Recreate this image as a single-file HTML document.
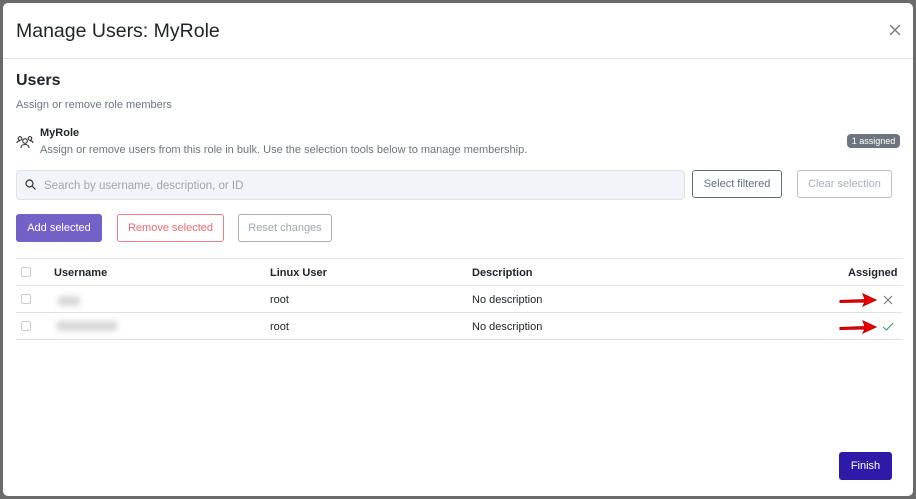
<!DOCTYPE html>
<html><head><meta charset="utf-8"><style>
*{box-sizing:border-box;margin:0;padding:0}
html,body{width:916px;height:499px;overflow:hidden}
body{background:#6b6b6b;font-family:"Liberation Sans",sans-serif;position:relative}
.modal{position:absolute;left:3px;top:3px;width:910px;height:493px;background:#fff;border-radius:5px;overflow:hidden}
.hdr{height:56px;border-bottom:1px solid #dee2e6;position:relative}
.hdr h1{position:absolute;left:13px;top:17px;font-size:19.5px;font-weight:normal;color:#212529}
.close{position:absolute;right:12px;top:21px}
.abs{position:absolute}
.t{color:#212529}
.muted{color:#6c757d}
.btn{position:absolute;border-radius:3px;font-size:11px;text-align:center;background:#fff}
.cb{position:absolute;width:10px;height:10px;border:1px solid #ccc;border-radius:2px;left:18px}
.line{position:absolute;left:13px;width:886px;height:1px;background:#dee2e6}
.blur{position:absolute;background:#d8d8d8;filter:blur(3px)}
</style></head><body>
<div class="modal">
<div class="hdr"><h1>Manage Users: MyRole</h1>
<svg class="close" width="12" height="12" viewBox="0 0 12 12"><path d="M1 1L11 11M11 1L1 11" stroke="#777" stroke-width="1.3"/></svg></div>
<div class="abs t" style="left:13px;top:69px;font-size:16px;font-weight:bold">Users</div>
<div class="abs muted" style="left:13px;top:96px;font-size:11px">Assign or remove role members</div>
<svg class="abs" style="left:13px;top:132px" width="18" height="14" viewBox="0 0 18 14" fill="none" stroke="#333" stroke-width="1.1"><circle cx="9" cy="6" r="2.3"/><path d="M5 13c0-2.5 2-3.5 4-3.5s4 1 4 3.5"/><circle cx="4" cy="3.5" r="1.8"/><circle cx="14" cy="3.5" r="1.8"/><path d="M1 8c0-1.5 1.2-2.2 3-2.2M17 8c0-1.5-1.2-2.2-3-2.2"/></svg>
<div class="abs t" style="left:37px;top:124px;font-size:11px;font-weight:bold">MyRole</div>
<div class="abs muted" style="left:37px;top:141px;font-size:11px">Assign or remove users from this role in bulk. Use the selection tools below to manage membership.</div>
<div class="abs" style="left:844px;top:131px;width:53px;height:14px;background:#6c757d;border-radius:4px;color:#fff;font-size:9px;line-height:14px;text-align:center">1 assigned</div>
<div class="abs" style="left:13px;top:167px;width:669px;height:30px;background:#f1f4f8;border:1px solid #dde2e8;border-radius:4px"></div>
<svg class="abs" style="left:22px;top:176px" width="11" height="11" viewBox="0 0 11 11" fill="none" stroke="#333" stroke-width="1.2"><circle cx="4.5" cy="4.5" r="3.5"/><path d="M7 7l3.5 3.5"/></svg>
<div class="abs" style="left:41px;top:177px;font-size:11.5px;color:#a0a6ad">Search by username, description, or ID</div>
<div class="btn" style="left:689px;top:167px;width:90px;height:28px;border:1px solid #5f7180;color:#5f7180;line-height:27px">Select filtered</div>
<div class="btn" style="left:794px;top:167px;width:95px;height:28px;border:1px solid #b8c0c6;color:#a8b0b6;line-height:27px">Clear selection</div>
<div class="btn" style="left:13px;top:211px;width:86px;height:28px;background:#7461c7;color:#fff;line-height:29px">Add selected</div>
<div class="btn" style="left:114px;top:211px;width:107px;height:28px;border:1px solid #ef7f85;color:#ef6a70;line-height:27px">Remove selected</div>
<div class="btn" style="left:235px;top:211px;width:94px;height:28px;border:1px solid #a8b0b6;color:#a0a8ae;line-height:27px">Reset changes</div>
<div class="line" style="top:255px"></div>
<div class="line" style="top:282px"></div>
<div class="line" style="top:309px"></div>
<div class="line" style="top:336px"></div>
<div class="cb" style="top:264px"></div><div class="cb" style="top:291px"></div><div class="cb" style="top:318px"></div>
<div class="abs t" style="left:51px;top:264px;font-size:11px;font-weight:bold">Username</div>
<div class="abs t" style="left:267px;top:264px;font-size:11px;font-weight:bold">Linux User</div>
<div class="abs t" style="left:469px;top:264px;font-size:11px;font-weight:bold">Description</div>
<div class="abs t" style="left:845px;top:264px;font-size:11px;font-weight:bold">Assigned</div>
<div class="blur" style="left:55px;top:293px;width:22px;height:10px"></div>
<div class="blur" style="left:54px;top:318px;width:60px;height:10px"></div>
<div class="abs t" style="left:267px;top:291px;font-size:11px">root</div>
<div class="abs t" style="left:469px;top:291px;font-size:11px">No description</div>
<div class="abs t" style="left:267px;top:318px;font-size:11px">root</div>
<div class="abs t" style="left:469px;top:318px;font-size:11px">No description</div>
<svg class="abs" style="left:836px;top:289px" width="40" height="16" viewBox="0 0 40 16"><path d="M1 8.5L26 7.5L24 2L37 8L24 14L26 10L1 10.5Z" fill="#e00" stroke="#b00" stroke-width="1"/></svg>
<svg class="abs" style="left:836px;top:316px" width="40" height="16" viewBox="0 0 40 16"><path d="M1 8.5L26 7.5L24 2L37 8L24 14L26 10L1 10.5Z" fill="#e00" stroke="#b00" stroke-width="1"/></svg>
<svg class="abs" style="left:880px;top:292px" width="10" height="10" viewBox="0 0 10 10"><path d="M1 1L9 9M9 1L1 9" stroke="#777" stroke-width="1.1"/></svg>
<svg class="abs" style="left:879px;top:319px" width="12" height="9" viewBox="0 0 12 9"><path d="M1 5L4.5 8L11 1" stroke="#3a9a6a" stroke-width="1.1" fill="none"/></svg>
<div class="btn" style="left:836px;top:449px;width:53px;height:28px;background:#2e1aa9;color:#fff;line-height:29px;border-radius:3px">Finish</div>
</div>
</body></html>
